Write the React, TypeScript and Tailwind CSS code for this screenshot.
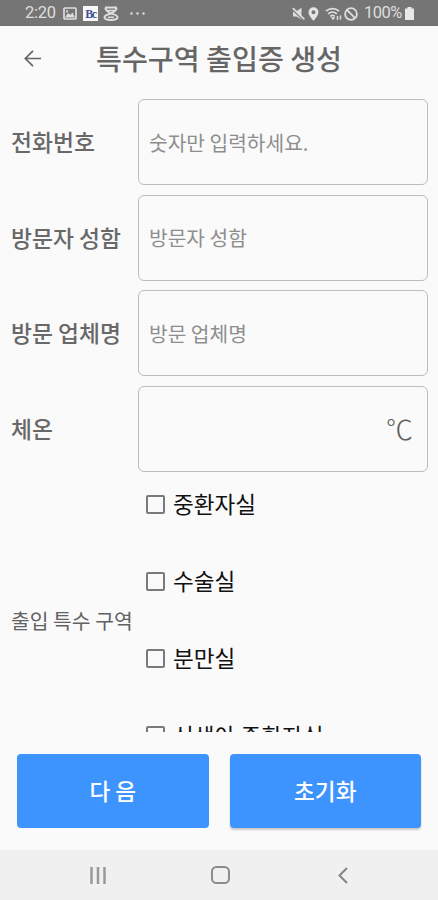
import clsx from "clsx";

interface IField {
  id: string;
  label: string;
  placeholder?: string;
  unit?: string;
}

const fields: IField[] = [
  { id: "phone", label: "전화번호", placeholder: "숫자만 입력하세요." },
  { id: "name", label: "방문자 성함", placeholder: "방문자 성함" },
  { id: "company", label: "방문 업체명", placeholder: "방문 업체명" },
  { id: "temperature", label: "체온", unit: "℃" },
];

const areas = ["중환자실", "수술실", "분만실", "신생아 중환자실"];

function StatusBar() {
  return (
    <div className="flex h-[26px] shrink-0 items-center bg-[#757575] pl-[25px] pr-[24px] pt-px font-['Roboto',sans-serif] text-[16.5px] leading-none text-[#dedede]">
      <span className="w-[31px] whitespace-nowrap tracking-[-0.3px]">2:20</span>

      <svg className="ml-[7px]" width="14" height="13" viewBox="0 0 14 13">
        <rect x="1" y="1" width="12" height="11" rx="1" fill="none" stroke="#dedede" strokeWidth="1.7" />
        <path d="M2 10.500 5 6l2.300 2L9.500 5.500l2.500 5z" fill="#dedede" />
        <path d="M4 3v2.500" stroke="#dedede" strokeWidth="1.5" />
      </svg>

      <span className="ml-[6px] flex h-[15px] w-[15px] items-center justify-center bg-[#f8f8f8] font-['Liberation_Serif',serif] text-[12px] font-bold tracking-[-1.5px] text-[#405095]">
        Bc
      </span>

      <svg className="ml-[5px]" width="16" height="15" viewBox="0 0 16 15">
        <path
          d="M2 1.500h12M2.500 2c0 3 3 3.800 5.500 5.500C10.500 5.800 13.500 5 13.500 2M8 7.500C5 8.300 1.500 9 1.500 11.300S5 14 8 14s6.500-.5 6.500-2.700S11 8.300 8 7.500z"
          fill="none"
          stroke="#dedede"
          strokeWidth="2"
        />
        <path d="M5 4.500h6M5 11.300h6" stroke="#dedede" strokeWidth="1.5" />
      </svg>

      <svg className="ml-[11px]" width="15" height="3" viewBox="0 0 15 3" fill="#dedede">
        <circle cx="1.5" cy="1.5" r="1.2" />
        <circle cx="7.5" cy="1.5" r="1.2" />
        <circle cx="13.5" cy="1.5" r="1.2" />
      </svg>

      <div className="ml-auto flex items-center">
        <svg width="13" height="14" viewBox="0 0 13 14">
          <path d="M1 4.500h3L9.500.8v11.700L4.500 9.500H1z" fill="#dedede" />
          <path d="M0 2.200 12 13.500" stroke="#757575" strokeWidth="1.5" />
          <path d="M.8 1.200 12.400 12.400" stroke="#dedede" strokeWidth="1.700" />
        </svg>
        <svg className="ml-[3px]" width="11" height="14" viewBox="0 0 11 14">
          <path
            d="M5.500.3a5 5 0 0 0-5 4.900c0 3.500 5 8.500 5 8.500s5-5 5-8.500a5 5 0 0 0-5-4.900zm0 3a2 2 0 1 1 0 4 2 2 0 0 1 0-4z"
            fill="#e4e4e4"
            fillRule="evenodd"
          />
        </svg>
        <svg className="ml-[6px]" width="17" height="14" viewBox="0 0 17 14">
          <g fill="none" stroke="#dedede" strokeWidth="1.7">
            <path d="M1 4.200a9.500 9.500 0 0 1 13 0" />
            <path d="M3.200 6.800a6.500 6.500 0 0 1 8.600 0" />
            <path d="M5.300 9.300a3.500 3.500 0 0 1 4.400 0" />
          </g>
          <path d="m8 13-2.500-2.800h5z" fill="#dedede" />
          <path d="M12.500 9v4M15.500 8.500v4" stroke="#dedede" strokeWidth="1.5" />
        </svg>
        <svg className="ml-[2px]" width="14" height="14" viewBox="0 0 14 14" fill="none" stroke="#dedede" strokeWidth="1.8">
          <circle cx="7" cy="7" r="5.9" />
          <path d="m2.900 2.900 8.200 8.200" />
        </svg>
        <span className="ml-[6px] w-[38px] whitespace-nowrap tracking-[-0.5px]">100%</span>
        <svg className="ml-[3px]" width="9" height="13" viewBox="0 0 9 13" fill="#e8e8e8">
          <path d="M2.500 0h4v1.500H9V13H0V1.500h2.500z" />
        </svg>
      </div>
    </div>
  );
}

function Header() {
  return (
    <header className="relative flex h-[68px] shrink-0 items-center justify-center pb-[3px] text-[#666]">
      <svg
        className="absolute left-[24px] top-[24px]"
        width="17"
        height="17"
        viewBox="0 0 17 17"
        fill="none"
        stroke="#666"
        strokeWidth="1.7"
      >
        <path d="M17 8.500H1.500M9 .8 1.300 8.500 9 16.200" />
      </svg>
      <h1 className="text-[28.200px] font-medium leading-none">특수구역 출입증 생성</h1>
    </header>
  );
}

function Field({ id, label, placeholder, unit }: IField) {
  return (
    <div className="flex h-[86px] items-center">
      <label
        htmlFor={id}
        className="w-[127px] whitespace-nowrap text-[22.800px] font-medium text-[#686868]"
      >
        {label}
      </label>
      <div className="flex h-full flex-1 items-center rounded-[6px] border-[1.500px] border-[#bdbdbd] pl-[10px] pr-[14px]">
        <input
          id={id}
          placeholder={placeholder}
          className="min-w-0 flex-1 bg-transparent text-[20.300px] text-[#333] outline-none placeholder:text-[#8e8e8e]"
        />
        {unit && <span className="text-[27px] font-light leading-none text-[#606060]">{unit}</span>}
      </div>
    </div>
  );
}

export default function App() {
  return (
    <div className="flex h-[900px] w-[438px] flex-col overflow-hidden bg-[#fafafa] font-['Noto_Sans_CJK_KR',sans-serif]">
      <StatusBar />
      <Header />

      <main className="h-[638px] shrink-0 overflow-hidden pl-[11px] pr-[10px] pt-[5px]">
        <div className="flex flex-col gap-[9.670px]">
          {fields.map((field) => (
            <Field key={field.id} {...field} />
          ))}
        </div>

        <div className="flex h-[296px] items-center">
          <span className="w-[135px] whitespace-nowrap text-[20.400px] text-[#626262]">
            출입 특수 구역
          </span>
          <ul className="flex flex-col">
            {areas.map((area) => (
              <li key={area} className="flex h-[77.300px] items-center">
                <label className="flex items-center gap-[8px] whitespace-nowrap text-[22.600px] leading-none text-[#111]">
                  <input
                    type="checkbox"
                    className="h-[19px] w-[19px] appearance-none rounded-[2px] border-2 border-[#7a7a7a]"
                  />
                  {area}
                </label>
              </li>
            ))}
          </ul>
        </div>
      </main>

      <footer className="flex h-[118px] shrink-0 gap-[21px] px-[17px] pt-[22px]">
        {["다 음", "초기화"].map((text, index) => (
          <button
            key={text}
            className={clsx(
              "h-[74px] flex-1 rounded-[4px] bg-[#3e94ff] text-[22.600px] font-medium text-white",
              index === 1 && "shadow-[0_2px_2px_rgba(0,0,0,0.2)]"
            )}
          >
            {text}
          </button>
        ))}
      </footer>

      <nav className="flex h-[50px] shrink-0 items-center bg-[#f0f0f0] pl-[89px]">
        <svg width="18" height="17" viewBox="0 0 18 17" stroke="#999" strokeWidth="2.5">
          <path d="M2.500 0v17M9 0v17M15.500 0v17" />
        </svg>
        <svg className="ml-[104px]" width="19" height="18" viewBox="0 0 19 18" fill="none" stroke="#8c8c8c" strokeWidth="2">
          <rect x="1" y="1" width="17" height="16" rx="4.500" />
        </svg>
        <svg className="ml-[108px]" width="10" height="17" viewBox="0 0 10 17" fill="none" stroke="#858585" strokeWidth="2">
          <path d="M9 1 1.500 8.500 9 16" />
        </svg>
      </nav>
    </div>
  );
}
